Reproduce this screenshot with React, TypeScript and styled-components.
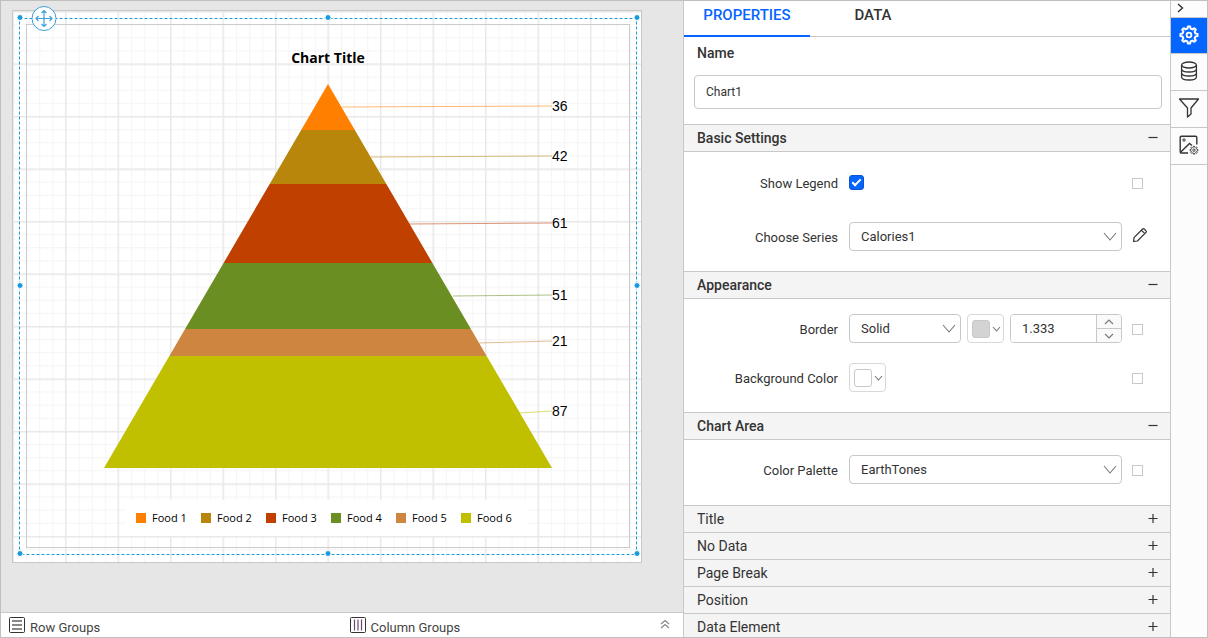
import React from "react";
import styled, { createGlobalStyle } from "styled-components";

const line = "#c8c8c8";
const accent = "#0565ff";
const ink = "#333333";

const Global = createGlobalStyle`
  *, *::before, *::after { box-sizing: border-box; }
  body { margin: 0; font-family: Roboto, "Liberation Sans", sans-serif; font-size: 13px; color: ${ink}; background: #fff; }
  button, input, select { font: inherit; color: inherit; }
  button { padding: 0; border: 0; background: none; cursor: pointer; }
`;

const Shell = styled.div`
  display: flex;
  height: 100vh;
  border: 1px solid #c0c0c0;
  overflow: hidden;
`;

/* ---------- design surface ---------- */

const Workspace = styled.main`
  flex: 1;
  min-width: 0;
  display: flex;
  flex-direction: column;
  background: #e6e6e6;
`;

const Scroller = styled.div`
  flex: 1;
  min-height: 0;
  overflow: hidden;
  padding: 9px 0 0 11px;
`;

const Sheet = styled.svg`
  display: block;
  overflow: visible;
`;

const TitleText = styled.text`
  font: 700 14px "Open Sans", sans-serif;
`;

const ValueText = styled.text`
  font: 14px "Liberation Sans", sans-serif;
`;

const LegendText = styled.text`
  font: 11px "Open Sans", sans-serif;
`;

const GroupBar = styled.footer`
  display: grid;
  grid-template-columns: 1fr 1fr;
  height: 25px;
  padding-left: 1px;
  background: #fff;
  border-top: 1px solid ${line};
`;

const Group = styled.div`
  display: flex;
  align-items: center;
  gap: 5px;
  padding: 0 13px 0 7px;
  color: #444;
  line-height: 16px;

  span { padding-top: 5px; }
  button { margin-left: auto; }
`;

/* ---------- property panel ---------- */

const Panel = styled.aside`
  flex: none;
  width: 487px;
  background: #fff;
  border-left: 1px solid ${line};
  overflow: hidden;
`;

const Tabs = styled.nav`
  display: flex;
  height: 36px;
  border-bottom: 1px solid ${line};
`;

const Tab = styled.button<{ $active?: boolean }>`
  width: 126px;
  height: 36px;
  padding-bottom: 6px;
  font-size: 15px;
  font-weight: 500;
  color: ${(p) => (p.$active ? accent : ink)};
  border-bottom: 2px solid ${(p) => (p.$active ? accent : "transparent")};
`;

const NameField = styled.div`
  display: flex;
  flex-direction: column;
  gap: 13px;
  padding: 8px 8px 15px 10px;

  label { padding-left: 3px; font-size: 14px; line-height: 17px; font-weight: 500; }
`;

const TextBox = styled.input`
  width: 100%;
  height: 34px;
  padding: 0 11px;
  font-size: 12px;
  border: 1px solid ${line};
  border-radius: 4px;
  background: #fff;
`;

const SectionHeader = styled.button<{ $open?: boolean }>`
  display: flex;
  align-items: center;
  justify-content: space-between;
  width: 100%;
  height: ${(p) => (p.$open ? 28 : 27)}px;
  padding: 0 12px 0 13px;
  text-align: left;
  font-size: 14px;
  font-weight: ${(p) => (p.$open ? 500 : 400)};
  background: #f4f4f4;
  border-top: 1px solid ${line};
  border-bottom: ${(p) => (p.$open ? `1px solid ${line}` : "0")};
`;

const SectionBody = styled.div<{ $top?: number; $gap?: number; $bottom?: number }>`
  display: flex;
  flex-direction: column;
  gap: ${(p) => p.$gap ?? 20}px;
  padding: ${(p) => p.$top ?? 15}px 22px ${(p) => p.$bottom ?? 20}px 0;
`;

const Row = styled.div`
  display: grid;
  grid-template-columns: 155px minmax(0, 1fr) 16px;
  column-gap: 10px;
  align-items: center;
  height: 29px;
`;

const RowLabel = styled.label`
  padding: 2px 1px 0 0;
  text-align: right;
`;

const Controls = styled.div`
  display: flex;
  gap: 6px;
`;

const SelectWrap = styled.div<{ $width?: number }>`
  position: relative;
  flex: ${(p) => (p.$width ? "none" : "1")};
  width: ${(p) => (p.$width ? `${p.$width}px` : "auto")};

  svg { position: absolute; right: 5px; top: 10px; pointer-events: none; }
`;

const SelectBox = styled.select`
  display: block;
  width: 100%;
  height: 29px;
  padding: 0 11px;
  appearance: none;
  border: 1px solid ${line};
  border-radius: 4px;
  background: #fff;
`;

const ColorButton = styled.button`
  display: flex;
  align-items: center;
  justify-content: space-between;
  width: 37px;
  height: 29px;
  padding: 0 2px 0 4px;
  border: 1px solid #d8d8d8;
  border-radius: 4px;
`;

const Swatch = styled.span<{ $color: string }>`
  width: 18px;
  height: 18px;
  border: 1px solid ${line};
  border-radius: 3px;
  background: ${(p) => p.$color};
`;

const Spinner = styled.div`
  flex: 1;
  min-width: 0;
  display: flex;
  height: 29px;
  border: 1px solid ${line};
  border-radius: 4px;
  overflow: hidden;

  input { flex: 1; width: 0; min-width: 0; padding: 0 11px; border: 0; background: #fff; }
`;

const Steps = styled.div`
  flex: none;
  display: flex;
  flex-direction: column;
  width: 25px;
  border-left: 1px solid ${line};

  button { flex: 1; display: flex; align-items: center; justify-content: center; background: #fafafa; }
  button + button { border-top: 1px solid ${line}; }
`;

const Check = styled.input`
  appearance: none;
  display: grid;
  place-items: center;
  width: 15px;
  height: 15px;
  margin: 0;
  border: 1px solid #0a56d0;
  border-radius: 3px;
  background: ${accent};

  &::after {
    content: "";
    width: 9px;
    height: 5px;
    margin-top: -2px;
    border: solid #fff;
    border-width: 0 0 2px 2px;
    transform: rotate(-45deg);
  }
`;

const Marker = styled.input`
  appearance: none;
  width: 11px;
  height: 11px;
  margin: 2px 0 0;
  border: 1px solid ${line};
  background: #fff;
`;

/* ---------- icon rail ---------- */

const Rail = styled.nav`
  flex: none;
  width: 37px;
  background: #fcfcfc;
  border-left: 1px solid ${line};
`;

const RailButton = styled.button<{ $active?: boolean; $small?: boolean }>`
  display: flex;
  align-items: center;
  justify-content: ${(p) => (p.$small ? "flex-start" : "center")};
  width: 100%;
  height: ${(p) => (p.$small ? 17 : p.$active ? 36 : 37)}px;
  padding: ${(p) => (p.$small ? "0 0 2px 6px" : "0 0 2px")};
  color: ${(p) => (p.$active ? "#fff" : "#333")};
  background: ${(p) => (p.$active ? accent : "transparent")};
  border-bottom: 1px solid ${line};
`;

const Chevron = ({ w = 13, h = 8, up = false, color = "#777" }: { w?: number; h?: number; up?: boolean; color?: string }) => (
  <svg width={w} height={h} viewBox={`0 0 ${w} ${h}`} fill="none" stroke={color} strokeWidth="1.1">
    <path d={up ? `M1 ${h - 1}L${w / 2} 1L${w - 1} ${h - 1}` : `M1 1L${w / 2} ${h - 1}L${w - 1} 1`} />
  </svg>
);

const ToggleIcon = ({ open }: { open?: boolean }) => (
  <svg width="10" height="10" viewBox="0 0 10 10" stroke="#333" strokeWidth="1.2">
    <path d={open ? "M0.5 4.5H9.5" : "M0.5 4.5H9.5M5 0V9"} />
  </svg>
);

const gearPath = (cx: number, cy: number, outer: number, inner: number, teeth = 8) => {
  const pts: string[] = [];
  const step = (Math.PI * 2) / teeth;
  for (let i = 0; i < teeth; i++) {
    const a = i * step - Math.PI / 2;
    [[-0.3, inner], [-0.17, outer], [0.17, outer], [0.3, inner]].forEach(([k, r]) => {
      pts.push(`${(cx + Math.cos(a + k * step) * r).toFixed(2)} ${(cy + Math.sin(a + k * step) * r).toFixed(2)}`);
    });
  }
  return `M${pts.join("L")}Z`;
};

const slices = [
  { name: "Food 1", value: 36, color: "#ff8000", top: 84, bottom: 130, from: [342, 107], to: 106 },
  { name: "Food 2", value: 42, color: "#b8860b", top: 130, bottom: 184, from: [371, 157], to: 156 },
  { name: "Food 3", value: 61, color: "#c04000", top: 184, bottom: 263, from: [409, 224], to: 223 },
  { name: "Food 4", value: 51, color: "#6b8e23", top: 263, bottom: 329, from: [453, 296], to: 295 },
  { name: "Food 5", value: 21, color: "#cd853f", top: 329, bottom: 356, from: [479, 343], to: 341 },
  { name: "Food 6", value: 87, color: "#c0c000", top: 356, bottom: 468, from: [519, 413], to: 411 },
];

const apex = 328;
const half = (y: number) => ((y - 84) * 224) / 384;

const handles = [
  [20, 17], [328, 17], [637, 17],
  [20, 285], [637, 285],
  [20, 553], [328, 553], [637, 553],
];

const ReportSheet = () => (
  <Sheet width="631" height="554" viewBox="12 10 631 554" role="img" aria-label="Pyramid chart of calories">
    <defs>
      <pattern id="minor" x="13" y="11" width="13.12" height="13.12" patternUnits="userSpaceOnUse">
        <path d="M0 0.5H13.12M0.5 0V13.12" stroke="#f5f5f5" strokeWidth="1.2" fill="none" />
      </pattern>
      <pattern id="major" x="12.5" y="11" width="52.5" height="52.5" patternUnits="userSpaceOnUse">
        <path d="M0 0.7H52.5M0.7 0V52.5" stroke="#e9e9e9" strokeWidth="1.4" fill="none" />
      </pattern>
    </defs>
    <rect x="12.5" y="10.5" width="629" height="552" fill="#fff" />
    <rect x="13" y="11" width="628" height="551" fill="url(#minor)" />
    <rect x="13" y="11" width="628" height="551" fill="url(#major)" />
    <rect x="12.5" y="10.5" width="629" height="552" fill="none" stroke={line} />
    <rect x="26.5" y="24.5" width="603" height="523" fill="none" stroke="#cccccc" />
    <TitleText x="328" y="63" textAnchor="middle">Chart Title</TitleText>
    {slices.map((s) => (
      <g key={s.name}>
        <polygon
          fill={s.color}
          points={`${apex - half(s.top)},${s.top} ${apex + half(s.top)},${s.top} ${apex + half(s.bottom)},${s.bottom} ${apex - half(s.bottom)},${s.bottom}`}
        />
        <path d={`M${s.from[0]} ${s.from[1]}L552 ${s.to}`} stroke={s.color} strokeOpacity="0.55" />
        <ValueText x="552" y={s.to + 5}>{s.value}</ValueText>
      </g>
    ))}
    <rect x="126" y="500" width="401" height="36" fill="#fff" />
    {slices.map((s, i) => (
      <g key={s.name}>
        <rect x={136 + i * 65} y="513" width="10" height="10" fill={s.color} />
        <LegendText x={152 + i * 65} y="522">{s.name}</LegendText>
      </g>
    ))}
    <rect x="19.5" y="18.5" width="617" height="536" fill="none" stroke="#1a9bdc" strokeDasharray="3 2" />
    {handles.map(([x, y]) => (
      <circle key={`${x}-${y}`} cx={x} cy={y + 0.5} r="3" fill="#1a9bdc" stroke="#fff" strokeWidth="1" />
    ))}
    <circle cx="44" cy="18.5" r="12" fill="#fff" stroke="#3d9fd8" />
    <path
      d="M44 11V26M36 18.5H52M41.5 13L44 10.5L46.5 13M41.5 24L44 26.5L46.5 24M38.5 16L36 18.5L38.5 21M49.5 16L52 18.5L49.5 21"
      fill="none"
      stroke="#3d9fd8"
      strokeWidth="1.2"
    />
  </Sheet>
);

const RowsIcon = () => (
  <svg width="16" height="16" viewBox="0 0 16 16" fill="none">
    <rect x="0.5" y="0.5" width="15" height="15" rx="1" stroke="#333" />
    <path d="M3 4H13M3 8H13M3 12H13" stroke="#888" strokeWidth="1.8" />
  </svg>
);

const ColumnsIcon = () => (
  <svg width="16" height="16" viewBox="0 0 16 16" fill="none">
    <rect x="0.5" y="0.5" width="15" height="15" rx="1" stroke="#333" />
    <path d="M4.5 2.5V13.5M8 2.5V13.5M11.5 2.5V13.5" stroke="#6b4a6b" strokeWidth="1.2" />
  </svg>
);

export default function App() {
  return (
    <>
      <Global />
      <Shell>
        <Workspace>
          <Scroller>
            <ReportSheet />
          </Scroller>
          <GroupBar>
            <Group><RowsIcon /><span>Row Groups</span></Group>
            <Group>
              <ColumnsIcon /><span>Column Groups</span>
              <button aria-label="Expand groups">
                <svg width="10" height="10" viewBox="0 0 10 10" fill="none" stroke="#888" strokeWidth="1.2">
                  <path d="M1 5L5 1.5L9 5M1 9L5 5.5L9 9" />
                </svg>
              </button>
            </Group>
          </GroupBar>
        </Workspace>

        <Panel>
          <Tabs>
            <Tab $active>PROPERTIES</Tab>
            <Tab>DATA</Tab>
          </Tabs>
          <NameField>
            <label htmlFor="name">Name</label>
            <TextBox id="name" defaultValue="Chart1" />
          </NameField>

          <SectionHeader $open>Basic Settings<ToggleIcon open /></SectionHeader>
          <SectionBody $top={16} $gap={25}>
            <Row>
              <RowLabel htmlFor="legend">Show Legend</RowLabel>
              <Controls><Check id="legend" type="checkbox" defaultChecked /></Controls>
              <Marker type="checkbox" aria-label="Legend expression" />
            </Row>
            <Row>
              <RowLabel htmlFor="series">Choose Series</RowLabel>
              <Controls>
                <SelectWrap>
                  <SelectBox id="series"><option>Calories1</option></SelectBox>
                  <Chevron w={14} h={9} />
                </SelectWrap>
              </Controls>
              <button aria-label="Edit series">
                <svg width="16" height="16" viewBox="0 0 16 16" fill="none" stroke="#333" strokeWidth="1.2" strokeLinejoin="round">
                  <path d="M1.6 14.4L2 10.6L10.6 2Q11.4 1.2 12.2 2L14 3.8Q14.8 4.6 14 5.4L5.4 14Z M9.4 3.2L12.8 6.6" />
                </svg>
              </button>
            </Row>
          </SectionBody>

          <SectionHeader $open>Appearance<ToggleIcon open /></SectionHeader>
          <SectionBody>
            <Row>
              <RowLabel htmlFor="border">Border</RowLabel>
              <Controls>
                <SelectWrap $width={112}>
                  <SelectBox id="border"><option>Solid</option></SelectBox>
                  <Chevron w={14} h={9} />
                </SelectWrap>
                <ColorButton aria-label="Border color"><Swatch $color="#d3d3d3" /><Chevron w={9} h={6} /></ColorButton>
                <Spinner>
                  <input aria-label="Border width" defaultValue="1.333" />
                  <Steps>
                    <button aria-label="Increase"><Chevron w={10} h={6} up /></button>
                    <button aria-label="Decrease"><Chevron w={10} h={6} /></button>
                  </Steps>
                </Spinner>
              </Controls>
              <Marker type="checkbox" aria-label="Border expression" />
            </Row>
            <Row>
              <RowLabel htmlFor="background">Background Color</RowLabel>
              <Controls>
                <ColorButton id="background"><Swatch $color="#ffffff" /><Chevron w={9} h={6} /></ColorButton>
              </Controls>
              <Marker type="checkbox" aria-label="Background expression" />
            </Row>
          </SectionBody>

          <SectionHeader $open>Chart Area<ToggleIcon open /></SectionHeader>
          <SectionBody $bottom={21}>
            <Row>
              <RowLabel htmlFor="palette">Color Palette</RowLabel>
              <Controls>
                <SelectWrap>
                  <SelectBox id="palette"><option>EarthTones</option></SelectBox>
                  <Chevron w={14} h={9} />
                </SelectWrap>
              </Controls>
              <Marker type="checkbox" aria-label="Palette expression" />
            </Row>
          </SectionBody>

          {["Title", "No Data", "Page Break", "Position", "Data Element"].map((name) => (
            <SectionHeader key={name}>{name}<ToggleIcon /></SectionHeader>
          ))}
        </Panel>

        <Rail>
          <RailButton $small aria-label="Collapse panel">
            <svg width="7" height="10" viewBox="0 0 7 10" fill="none" stroke="#333" strokeWidth="1.4">
              <path d="M1 1L5.5 5L1 9" />
            </svg>
          </RailButton>
          <RailButton $active aria-label="Properties">
            <svg width="20" height="20" viewBox="0 0 20 20" fill="none" stroke="currentColor" strokeWidth="2" strokeLinejoin="round">
              <path d={gearPath(10, 10, 8.6, 6.6)} />
              <circle cx="10" cy="10" r="2.4" strokeWidth="1.8" />
            </svg>
          </RailButton>
          <RailButton aria-label="Data">
            <svg width="18" height="20" viewBox="0 0 18 20" fill="none" stroke="currentColor" strokeWidth="1.3">
              <ellipse cx="9" cy="4" rx="7.4" ry="3" />
              <path d="M1.6 4V16C1.6 20 16.4 20 16.4 16V4M1.6 8C1.6 12 16.4 12 16.4 8M1.6 12C1.6 16 16.4 16 16.4 12" />
            </svg>
          </RailButton>
          <RailButton aria-label="Filters">
            <svg width="22" height="20" viewBox="0 0 22 20" fill="none" stroke="currentColor" strokeWidth="1.3" strokeLinejoin="round">
              <path d="M1.5 1H20.5L13 10V16L9.5 19V10Z" />
            </svg>
          </RailButton>
          <RailButton aria-label="Image settings">
            <svg width="20" height="20" viewBox="0 0 20 20" fill="none" stroke="currentColor" strokeWidth="1.4">
              <path d="M9 18H2.5Q1.2 18 1.2 16.7V2.5Q1.2 1.2 2.5 1.2H16.5Q17.8 1.2 17.8 2.5V9.5" />
              <path d="M1.8 17L10.5 8.5L13 10.5" />
              <circle cx="5" cy="5" r="1.2" strokeWidth="1" />
              <path d={gearPath(15, 15.2, 4, 3)} strokeWidth="0.9" />
              <circle cx="15" cy="15.2" r="1.2" strokeWidth="0.9" />
            </svg>
          </RailButton>
        </Rail>
      </Shell>
    </>
  );
}
